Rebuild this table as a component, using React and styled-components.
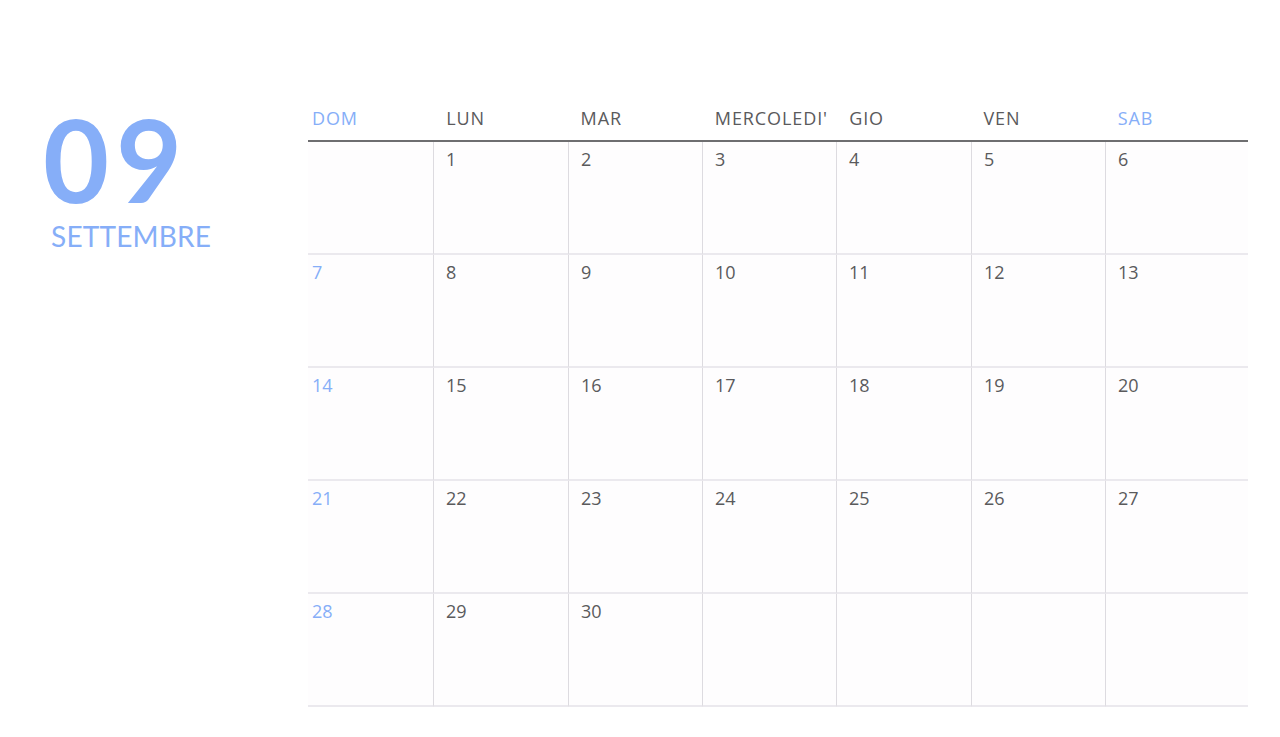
import React from 'react';
import styled, { createGlobalStyle } from 'styled-components';

const GlobalStyle = createGlobalStyle`
  body {
    margin: 0;
    background: #ffffff;
    font-family: "Lato", "Open Sans", sans-serif;
  }
`;

const giorni = ['DOM', 'LUN', 'MAR', "MERCOLEDI'", 'GIO', 'VEN', 'SAB'];

// settembre: inizia di lunedi
const celle = [null, ...Array.from({ length: 30 }, (_, i) => i + 1)];
while (celle.length < 35) celle.push(null);

function App() {
  return (
    <>
      <GlobalStyle />
      <Page>
        <MonthBox>
          <MonthNumber>09</MonthNumber>
          <MonthName>SETTEMBRE</MonthName>
        </MonthBox>
        <Calendar>
          <HeaderRow>
            {giorni.map((g, i) => (
              <DayName key={g} $weekend={i === 0 || i === 6}>{g}</DayName>
            ))}
          </HeaderRow>
          <Grid>
            {celle.map((n, i) => (
              <Cell key={i} $first={i % 7 === 0}>
                {n && <DayNumber $weekend={i % 7 === 0}>{n}</DayNumber>}
              </Cell>
            ))}
          </Grid>
        </Calendar>
      </Page>
    </>
  );
}

export default App;

const Page = styled.div`
  display: flex;
  width: 1280px;
  height: 737px;
  box-sizing: border-box;
  padding-top: 102px;
`;

const MonthBox = styled.div`
  width: 308px;
  display: flex;
  flex-direction: column;
  padding-left: 43px;
  box-sizing: border-box;
`;

const MonthNumber = styled.div`
  margin-top: 7px;
  font-family: "Lato", sans-serif;
  font-weight: 700;
  font-size: 114px;
  line-height: 100px;
  height: 100px;
  color: #86aef8;
  letter-spacing: 7px;
`;

const MonthName = styled.div`
  margin-top: 11px;
  padding-left: 8px;
  font-family: "Lato", sans-serif;
  font-size: 28px;
  line-height: 32px;
  color: #86aef8;
  letter-spacing: 0.2px;
`;

const Calendar = styled.div`
  width: 940px;
  display: flex;
  flex-direction: column;
`;

const HeaderRow = styled.div`
  display: grid;
  grid-template-columns: repeat(7, 1fr);
  border-bottom: 2px solid #6e6e70;
  padding-top: 2px;
  padding-bottom: 8px;
`;

const DayName = styled.div`
  padding-left: 4px;
  font-family: "Open Sans", sans-serif;
  font-size: 18px;
  line-height: 28px;
  letter-spacing: 0.9px;
  color: ${p => (p.$weekend ? '#86aef8' : '#5a5a5c')};
  white-space: nowrap;
`;

const Grid = styled.div`
  display: grid;
  grid-template-columns: 125px 135px 134px 134px 135px 134px 143px;
  grid-auto-rows: 113px;
  background: #fefdfe;
`;

const Cell = styled.div`
  box-sizing: border-box;
  border-bottom: 2px solid #ebe9ee;
  border-left: ${p => (p.$first ? 'none' : '1px solid #dddbe0')};
  padding: 6px 0 0 ${p => (p.$first ? '4px' : '12px')};
`;

const DayNumber = styled.span`
  font-family: "Open Sans", sans-serif;
  font-size: 18px;
  line-height: 22px;
  color: ${p => (p.$weekend ? '#86aef8' : '#5a5a5c')};
`;
